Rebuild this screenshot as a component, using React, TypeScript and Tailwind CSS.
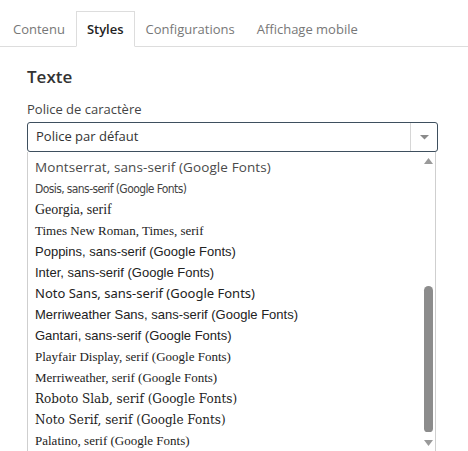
import React from "react";

const items: { label: string; font: string; size: string; cls?: string }[] = [
  { label: "Montserrat, sans-serif (Google Fonts)", font: "'Open Sans', sans-serif", size: "text-[13.5px]", cls: "text-[#4a4a4a] tracking-[0.1px]" },
  { label: "Dosis, sans-serif (Google Fonts)", font: "'DejaVu Sans Condensed', 'Liberation Sans Narrow', sans-serif", size: "text-[12px]", cls: "text-[#444] tracking-[-0.6px]" },
  { label: "Georgia, serif", font: "'Liberation Serif', serif", size: "text-[14px]", cls: "text-[#222]" },
  { label: "Times New Roman, Times, serif", font: "'Liberation Serif', serif", size: "text-[13px]", cls: "text-[#222]" },
  { label: "Poppins, sans-serif (Google Fonts)", font: "'Liberation Sans', Arial, sans-serif", size: "text-[13px]", cls: "text-[#222]" },
  { label: "Inter, sans-serif (Google Fonts)", font: "'Liberation Sans', Arial, sans-serif", size: "text-[13px]", cls: "text-[#222]" },
  { label: "Noto Sans, sans-serif (Google Fonts)", font: "'Noto Sans', sans-serif", size: "text-[13px]", cls: "text-[#222]" },
  { label: "Merriweather Sans, sans-serif (Google Fonts)", font: "'Liberation Sans', Arial, sans-serif", size: "text-[13px]", cls: "text-[#222]" },
  { label: "Gantari, sans-serif (Google Fonts)", font: "'Liberation Sans', Arial, sans-serif", size: "text-[13px]", cls: "text-[#222]" },
  { label: "Playfair Display, serif (Google Fonts)", font: "'Liberation Serif', serif", size: "text-[13px]", cls: "text-[#222]" },
  { label: "Merriweather, serif (Google Fonts)", font: "'Liberation Serif', serif", size: "text-[13px]", cls: "text-[#222]" },
  { label: "Roboto Slab, serif (Google Fonts)", font: "'DejaVu Serif', serif", size: "text-[12px]", cls: "text-[#222]" },
  { label: "Noto Serif, serif (Google Fonts)", font: "'DejaVu Serif', serif", size: "text-[12px]", cls: "text-[#222]" },
  { label: "Palatino, serif (Google Fonts)", font: "'Liberation Serif', serif", size: "text-[13px]", cls: "text-[#222]" },
];

const tabs = ["Contenu", "Styles", "Configurations", "Affichage mobile"];

export default function App() {
  return (
    <div className="w-[468px] h-[451px] overflow-hidden bg-white" style={{ fontFamily: "'Open Sans', sans-serif" }}>
      <div className="flex items-end h-[47px] border-b border-[#dddddd] pl-[2px]">
        {tabs.map((t) => {
          const active = t === "Styles";
          return (
            <div
              key={t}
              className={
                active
                  ? "h-[36px] -mb-px px-[10px] flex items-center pt-[2px] border border-[#dddddd] border-b-white bg-white text-[13px] text-[#222] font-semibold"
                  : "h-[35px] px-[11px] flex items-center pt-[2px] text-[13px] text-[#777]"
              }
            >
              {t}
            </div>
          );
        })}
      </div>
      <div className="pl-[27px] pr-[30px]">
        <div className="mt-[18px] text-[17px] leading-[24px] font-semibold text-[#333]">Texte</div>
        <div className="mt-[11px] text-[13px] leading-[18px] text-[#444]">Police de caractère</div>
        <div className="mt-[4px] w-[411px] h-[30px] border border-[#3e4f5e] rounded-[3px] flex items-stretch">
          <div className="flex-1 flex items-center pl-[8px] text-[13px] text-[#333]">Police par défaut</div>
          <div className="w-[27px] border-l border-[#d6d6d6] flex items-center justify-center">
            <svg width="9" height="5" viewBox="0 0 9 5">
              <polygon points="0,0 9,0 4.5,4.5" fill="#8a8a8a" />
            </svg>
          </div>
        </div>
        <div className="w-[409px] h-[300px] border-l border-r border-[#cfcfcf] flex">
          <div className="flex-1 overflow-hidden">
            <div className="pt-[5px]">
              {items.map((it) => (
                <div
                  key={it.label}
                  className={"h-[21px] pl-[7px] flex items-center whitespace-nowrap " + it.size + " " + (it.cls ?? "")}
                  style={{ fontFamily: it.font }}
                >
                  {it.label}
                </div>
              ))}
            </div>
          </div>
          <div className="w-[10px] mr-[2px] flex flex-col items-center">
            <svg className="mt-[6px]" width="9" height="6" viewBox="0 0 9 6">
              <polygon points="0,6 9,6 4.5,0" fill="#9a9a9a" />
            </svg>
            <div className="mt-[122px] w-[9px] h-[146px] rounded-t-[5px] rounded-b-[4px] bg-[#8c8c8c]" />
            <svg className="mt-[8px]" width="9" height="6" viewBox="0 0 9 6">
              <polygon points="0,0 9,0 4.5,6" fill="#9a9a9a" />
            </svg>
          </div>
        </div>
      </div>
    </div>
  );
}
